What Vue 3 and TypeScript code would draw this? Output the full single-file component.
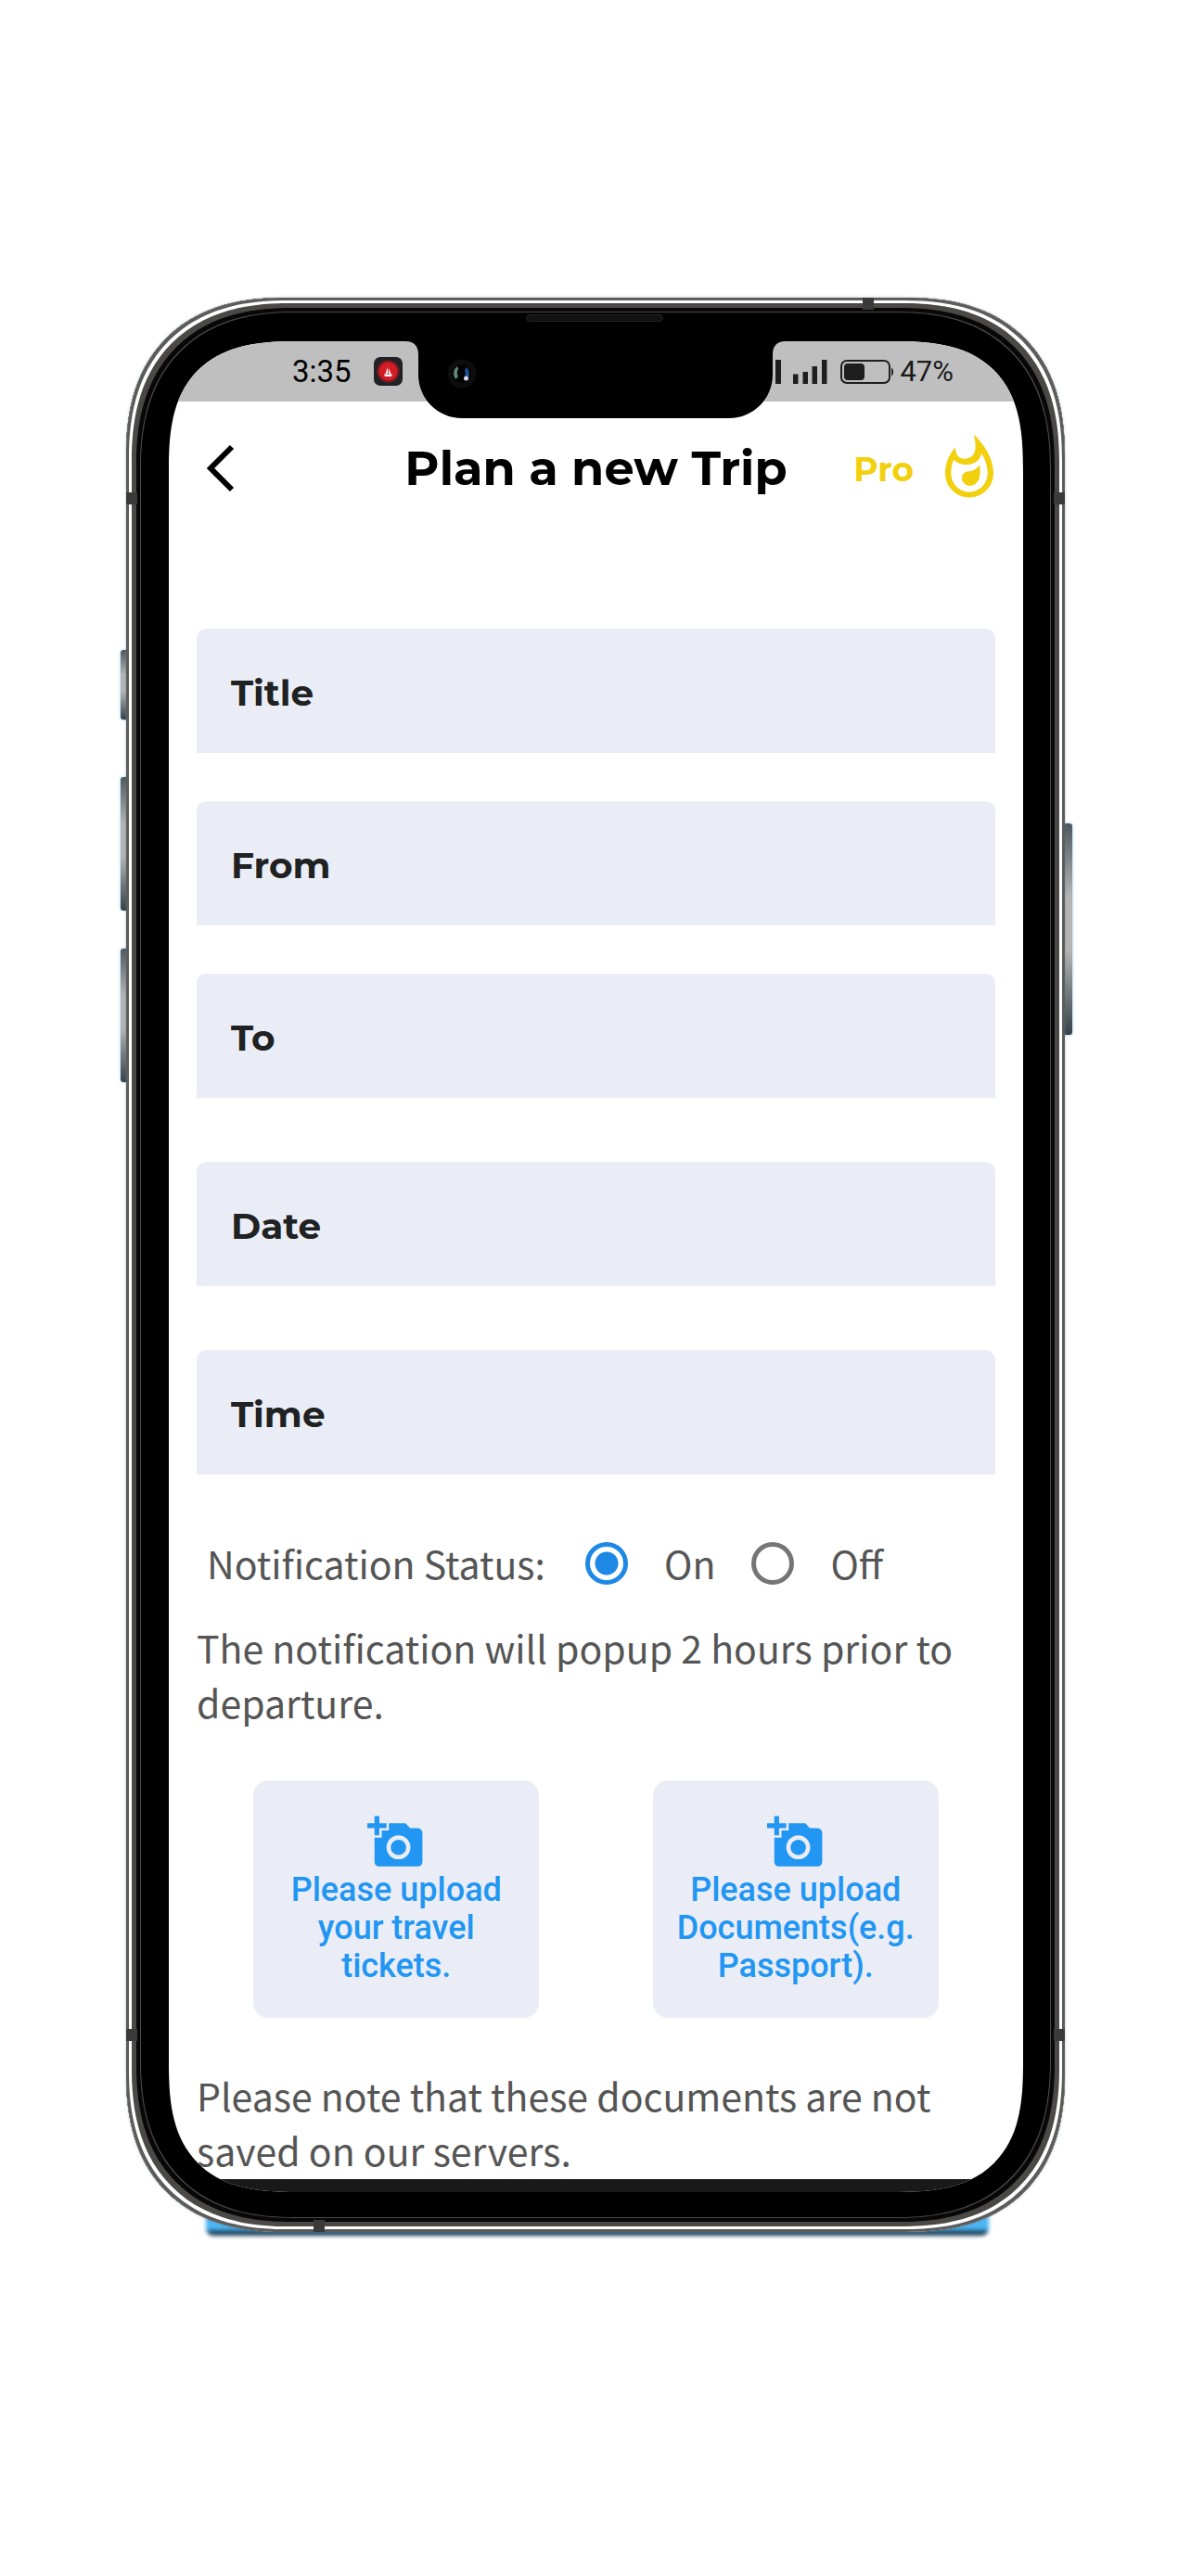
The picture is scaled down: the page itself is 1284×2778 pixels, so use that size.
<script setup lang="ts">
import { ref } from 'vue'

interface Field {
  id: string
  label: string
  spaced?: boolean
}

const fields: Field[] = [
  { id: 'title', label: 'Title' },
  { id: 'from', label: 'From' },
  { id: 'to', label: 'To' },
  { id: 'date', label: 'Date', spaced: true },
  { id: 'time', label: 'Time', spaced: true },
]

const values = ref<Record<string, string>>({ title: '', from: '', to: '', date: '', time: '' })
const notify = ref<'on' | 'off'>('on')

const uploads: string[] = [
  'Please upload your travel tickets.',
  'Please upload Documents(e.g. Passport).',
]
</script>

<template>
  <main class="page">
    <div class="device">
      <span class="glow"></span>
      <span class="key key-mute"></span>
      <span class="key key-up"></span>
      <span class="key key-down"></span>
      <span class="key key-power"></span>

      <div class="frame">
        <span class="band band-top"></span>
        <span class="band band-bottom"></span>
        <span class="band band-side band-tl"></span>
        <span class="band band-side band-tr"></span>
        <span class="band band-side band-bl"></span>
        <span class="band band-side band-br"></span>
        <span class="speaker"></span>

        <div class="screen">
          <div class="status">
            <div class="status-group">
              <span class="clock">3:35</span>
              <svg class="app-badge" viewBox="0 0 31 31" aria-hidden="true">
                <rect width="31" height="31" rx="7" fill="#212226" />
                <circle cx="15.5" cy="15.5" r="12" fill="#7a1a20" />
                <circle cx="15.5" cy="15.5" r="10" fill="#d31c25" />
                <path d="M15 11v7h-2.500zM16 12l2.500 6H16zM11 18.500h9l-1 2.500h-7z" fill="#fff" />
              </svg>
            </div>
            <div class="status-group status-right">
              <svg class="signals" viewBox="0 0 87 26" aria-hidden="true">
                <path
                  d="M0 15.500h5.500V26H0zM10.500 13H16v13h-5.500zM20.500 7H26v19h-5.500zM31 0h6v26h-6zM50 15.500h5.500V26H50zM60.500 13H66v13h-5.500zM70.500 7H76v19h-5.500zM81 0h5.500v26H81z"
                  fill="#1e1e1e"
                />
              </svg>
              <svg class="battery" viewBox="0 0 58 26" aria-hidden="true">
                <rect x="1" y="1" width="52" height="24" rx="6" fill="none" stroke="#1e1e1e" stroke-width="2" />
                <rect x="4" y="4" width="22" height="18" rx="4" fill="#1e1e1e" />
                <path d="M55 8.500c1.500 1 2 2.500 2 4.500s-.5 3.500-2 4.500z" fill="#1e1e1e" />
              </svg>
              <span class="percent">47%</span>
            </div>
          </div>

          <svg class="notch" viewBox="0 0 410 83" aria-hidden="true">
            <path d="M0 0C10 0 14 6 14 14V36C14 62 35 83 61 83H349C375 83 396 62 396 36V14C396 6 400 0 410 0Z" fill="#000" />
            <circle cx="61" cy="35" r="15.5" fill="#0d0d0e" />
            <circle cx="61" cy="35" r="10" fill="#020204" />
            <path d="M56 27a10 10 0 0 0-2 14l3-3a8 8 0 0 1 0-8z" fill="#5f8a78" />
            <path d="M66 28a10 10 0 0 1 2 11l-4-2a8 8 0 0 0 0-6z" fill="#1d4f91" />
            <circle cx="65.5" cy="40" r="2.5" fill="#d5d8ee" />
          </svg>

          <header class="bar">
            <button class="back" type="button" aria-label="Back">
              <svg viewBox="0 0 32 52" aria-hidden="true">
                <path d="M29 3L6 26L29 49" fill="none" stroke="#000" stroke-width="6" />
              </svg>
            </button>
            <h1>Plan a new Trip</h1>
            <button class="pro" type="button">
              <span>Pro</span>
              <svg viewBox="0 0 156 206" aria-hidden="true">
                <path
                  fill="#f2d00d"
                  fill-rule="evenodd"
                  d="M93 1C124 32 156 76 156 127C156 170 121 205 78 205C35 205 0 170 0 127C0 93 13 65 33 42C32 65 43 80 63 80C86 80 98 62 98 40C98 26 95 14 93 1ZM117 62C114 85 94 99 69 99C51 99 37 93 27 83C22 96 19 110 19 127C19 160 45 187 78 187C111 187 137 160 137 127C137 103 130 82 117 62ZM111 100C113 111 114 121 112 134C110 153 97 167 81 167C66 167 54 157 54 142C54 128 63 121 78 120C93 119 103 110 111 100Z"
                />
              </svg>
            </button>
          </header>

          <form class="form" @submit.prevent>
            <div v-for="f in fields" :key="f.id" class="field" :class="{ spaced: f.spaced }">
              <label :for="f.id">{{ f.label }}</label>
              <input :id="f.id" v-model="values[f.id]" type="text" />
            </div>

            <div class="notify" role="radiogroup" aria-labelledby="notify-label">
              <span id="notify-label">Notification Status:</span>
              <input id="notify-on" v-model="notify" type="radio" name="notify" value="on" />
              <label for="notify-on">On</label>
              <input id="notify-off" v-model="notify" type="radio" name="notify" value="off" />
              <label for="notify-off">Off</label>
            </div>

            <p>The notification will popup 2 hours prior to departure.</p>

            <div class="uploads">
              <button v-for="u in uploads" :key="u" class="upload" type="button">
                <svg viewBox="0 0 24 24" aria-hidden="true">
                  <path
                    fill="#2196f3"
                    d="M3 4V1h2v3h3v2H5v3H3V6H0V4h3zm3 6V7h3V4h7l1.830 2H21c1.100 0 2 .9 2 2v12c0 1.100-.9 2-2 2H5c-1.100 0-2-.9-2-2V10h3zm7 9c2.760 0 5-2.240 5-5s-2.240-5-5-5-5 2.240-5 5 2.240 5 5 5zm-3.200-5c0 1.770 1.430 3.200 3.200 3.200s3.200-1.430 3.200-3.200-1.430-3.200-3.200-3.200-3.200 1.430-3.200 3.200z"
                  />
                </svg>
                <span>{{ u }}</span>
              </button>
            </div>

            <p>Please note that these documents are not saved on our servers.</p>
          </form>
          <div class="system-bar"></div>
        </div>
      </div>
    </div>
  </main>
</template>

<style>
body {
  background: #fff;
}
</style>

<style scoped>
* {
  box-sizing: border-box;
}

.page {
  padding: 321px 136px 372px;
}

.device {
  position: relative;
  isolation: isolate;
}

.glow {
  position: absolute;
  left: 86px;
  right: 82px;
  bottom: -4px;
  height: 26px;
  border-radius: 8px;
  background: linear-gradient(#4db5f5 70%, #17394f 88%);
  filter: blur(2px);
}

.key {
  position: absolute;
  left: -6px;
  width: 10px;
  border-radius: 3px;
  background: linear-gradient(#4d5960, #b4b4b4 35%, #b4b4b4 60%, #34424a);
  box-shadow: 0 0 3px #7cc4ef;
}

.key-mute {
  top: 380px;
  height: 75px;
}

.key-up {
  top: 517px;
  height: 144px;
}

.key-down {
  top: 702px;
  height: 144px;
}

.key-power {
  left: auto;
  right: -8px;
  top: 567px;
  height: 228px;
}

.frame {
  position: relative;
  padding: 47px 45px 43px 46px;
  border-radius: 146px;
  background: #000;
  box-shadow:
    0 0 3px rgba(90, 130, 150, 0.5),
    inset 0 0 0 3px #5c5c5a,
    inset 0 0 0 6px #fff,
    inset 0 0 0 11px #4a4946,
    inset 0 0 0 15px #080808,
    inset 0 0 0 16px #4a4a4a;
}

.screen {
  position: relative;
  overflow: hidden;
  border-radius: 108px;
  background: #fff;
}

@supports (corner-shape: superellipse(1.4)) {
  .frame {
    border-radius: 172px;
    corner-shape: superellipse(1.25);
  }

  .screen {
    border-radius: 140px;
    corner-shape: superellipse(1.45);
  }
}

.band {
  position: absolute;
  width: 12px;
  height: 13px;
  background: #3a3a3a;
}

.band-top {
  top: 0;
  right: 206px;
}

.band-bottom {
  bottom: 0;
  left: 202px;
}

.band-side {
  left: 0;
}

.band-tl,
.band-tr {
  top: 210px;
}

.band-bl,
.band-br {
  bottom: 206px;
}

.band-tr,
.band-br {
  left: auto;
  right: 0;
}

.speaker {
  position: absolute;
  top: 18px;
  left: calc(50% - 75px);
  width: 148px;
  height: 8px;
  border: 1px solid #242424;
  border-radius: 4px;
  background: #111;
}

.status {
  display: flex;
  justify-content: space-between;
  height: 65px;
  padding: 0 75px 0 133px;
  background: #bfbfbf;
  color: #1a1a1a;
  font-family: Roboto, sans-serif;
  font-size: 31px;
  line-height: 65px;
}

.status-group {
  display: flex;
  align-items: center;
  gap: 24px;
}

.status-right {
  gap: 6px;
}

.clock {
  color: #000;
  font-size: 33px;
}

.app-badge {
  width: 31px;
  height: 31px;
}

.signals {
  width: 87px;
  height: 26px;
  margin-right: 8px;
}

.battery {
  width: 58px;
  height: 26px;
}

.notch {
  position: absolute;
  top: 0;
  left: calc(50% - 206px);
  width: 410px;
  height: 83px;
}

.bar {
  display: grid;
  grid-template-columns: 1fr auto 1fr;
  align-items: center;
  height: 142px;
  padding: 2px 32px 0;
}

button {
  padding: 0;
  border: 0;
  background: none;
  cursor: pointer;
}

.back {
  justify-self: start;
  height: 52px;
  padding-left: 7px;
}

.back svg {
  width: 32px;
  height: 52px;
}

h1 {
  margin: 0;
  color: #000;
  font: 700 51px/64px Montserrat, Inter, sans-serif;
}

.pro {
  display: flex;
  align-items: center;
  justify-self: end;
  gap: 34px;
  color: #f2d00d;
  font: 700 36px/42px Montserrat, Inter, sans-serif;
}

.pro span {
  padding-top: 2px;
}

.pro svg {
  width: 52px;
  height: 69px;
  margin-bottom: 6px;
}

.form {
  padding: 103px 30px 2px;
}

.field {
  display: flex;
  align-items: center;
  height: 134px;
  padding: 4px 36px 0 37px;
  border-radius: 10px 10px 0 0;
  background: #eaedf5;
}

.field + .field {
  margin-top: 52px;
}

.field + .spaced {
  margin-top: 69px;
}

.field label {
  color: #202122;
  font: 700 39px/48px Montserrat, Inter, sans-serif;
}

.field input {
  flex: 1;
  min-width: 0;
  height: 60px;
  margin-left: 24px;
  border: 0;
  outline: 0;
  background: transparent;
  font: 400 39px/48px Inter, sans-serif;
}

.notify,
p {
  color: #555;
  font: 400 41px/59px "Noto Sans CJK SC", "Noto Sans", sans-serif;
}

.notify {
  display: flex;
  align-items: center;
  gap: 39px;
  margin-top: 66px;
  padding-left: 11px;
}

.notify span {
  margin-right: 4px;
}

.notify input {
  appearance: none;
  flex: none;
  width: 46px;
  height: 46px;
  margin: 0;
  border: 5px solid #757575;
  border-radius: 50%;
}

.notify input:checked {
  border-color: #1e88e5;
  background: radial-gradient(circle, #1e88e5 12px, transparent 13px);
}

p {
  margin: 32px 0 0;
}

.uploads {
  display: flex;
  justify-content: space-around;
  margin: 55px 0 54px;
}

.upload {
  display: flex;
  flex-direction: column;
  align-items: center;
  justify-content: center;
  width: 308px;
  height: 256px;
  padding: 0 24px;
  border-radius: 16px;
  background: #eaedf5;
  color: #2196f3;
  font: 500 36px/41px Roboto, sans-serif;
  text-align: center;
}

.upload svg {
  width: 62px;
  height: 62px;
}

.uploads + p {
  margin-top: 0;
}

.system-bar {
  height: 14px;
  background: #191919;
}
</style>
